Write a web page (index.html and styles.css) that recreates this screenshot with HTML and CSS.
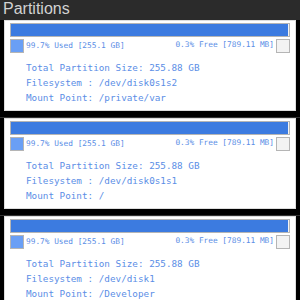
FILE: index.html
```html
<!DOCTYPE html>
<html>
<head>
<meta charset="utf-8">
<link rel="stylesheet" href="styles.css">
</head>
<body>
<div class="header"><span class="title">Partitions</span></div>
<div class="list">
  <div class="cell">
    <div class="card">
      <div class="bar"><div class="fill" style="width:99.7%"></div></div>
      <div class="legend">
        <span class="sq used"></span>
        <span class="ltext used-text">99.7% Used [255.1 GB]</span>
        <span class="ltext free-text">0.3% Free [789.11 MB]</span>
        <span class="sq free"></span>
      </div>
      <div class="info">
        <div>Total Partition Size: 255.88 GB</div>
        <div>Filesystem : /dev/disk0s1s2</div>
        <div>Mount Point: /private/var</div>
      </div>
    </div>
  </div>
  <div class="cell">
    <div class="card">
      <div class="bar"><div class="fill" style="width:99.7%"></div></div>
      <div class="legend">
        <span class="sq used"></span>
        <span class="ltext used-text">99.7% Used [255.1 GB]</span>
        <span class="ltext free-text">0.3% Free [789.11 MB]</span>
        <span class="sq free"></span>
      </div>
      <div class="info">
        <div>Total Partition Size: 255.88 GB</div>
        <div>Filesystem : /dev/disk0s1s1</div>
        <div>Mount Point: /</div>
      </div>
    </div>
  </div>
  <div class="cell">
    <div class="card">
      <div class="bar"><div class="fill" style="width:99.7%"></div></div>
      <div class="legend">
        <span class="sq used"></span>
        <span class="ltext used-text">99.7% Used [255.1 GB]</span>
        <span class="ltext free-text">0.3% Free [789.11 MB]</span>
        <span class="sq free"></span>
      </div>
      <div class="info">
        <div>Total Partition Size: 255.88 GB</div>
        <div>Filesystem : /dev/disk1</div>
        <div>Mount Point: /Developer</div>
      </div>
    </div>
  </div>
</div>
</body>
</html>
```
FILE: styles.css
```css
html, body {
  margin: 0;
  padding: 0;
  background: #000;
  overflow: hidden;
}
.header {
  height: 20px;
  background: #2b2b2b;
  overflow: hidden;
  padding-left: 3px;
}
.title {
  font-family: "Liberation Sans", Arial, sans-serif;
  font-size: 16px;
  line-height: 16px;
  color: #d2d2d2;
  display: block;
  margin-top: 1px;
}
.cell {
  padding: 0 4px 6px 4px;
}
.cell + .cell {
  border-top: 1px solid #333;
}
.card {
  background: #fff;
  border: 1px solid #ddd;
  padding: 2px 5px 5px 5px;
}
.bar {
  height: 12px;
  border: 1px solid #b5b5b5;
  background: #f3f3f3;
}
.fill {
  height: 100%;
  background: #3c7be0;
}
.legend {
  display: flex;
  height: 14px;
  margin-top: 2px;
  font-family: "DejaVu Sans Mono", monospace;
  font-size: 7.8px;
  color: #5b8ee6;
}
.sq {
  width: 12px;
  height: 12px;
  border: 1px solid #b5b5b5;
  flex: none;
}
.sq.used { background: #6a9ff5; }
.sq.free { background: #f3f3f3; }
.ltext {
  line-height: 9px;
  white-space: nowrap;
}
.used-text {
  margin-left: 2px;
  align-self: flex-end;
  margin-bottom: 3px;
}
.free-text {
  margin-left: auto;
  margin-right: 2px;
  margin-top: 1px;
}
.info {
  margin-top: 7px;
  padding-left: 16px;
  font-family: "DejaVu Sans Mono", monospace;
  font-size: 9.3px;
  line-height: 15px;
  color: #5b8ee6;
  white-space: nowrap;
}
```
